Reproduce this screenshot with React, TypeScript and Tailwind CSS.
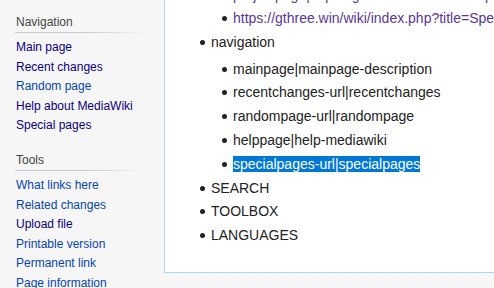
const navLinks = [
  { label: 'Main page', visited: true },
  { label: 'Recent changes', visited: true },
  { label: 'Random page', visited: false },
  { label: 'Help about MediaWiki', visited: true },
  { label: 'Special pages', visited: true },
];

const toolLinks = [
  { label: 'What links here', visited: false },
  { label: 'Related changes', visited: false },
  { label: 'Upload file', visited: true },
  { label: 'Printable version', visited: false },
  { label: 'Permanent link', visited: false },
  { label: 'Page information', visited: false },
];

type PortalProps = {
  title: string;
  links: { label: string; visited: boolean }[];
  className: string;
};

function Portal({ title, links, className }: PortalProps) {
  return (
    <div className={className}>
      <h3 className="text-[12px] leading-[16px] text-[#444] pb-[2px]">{title}</h3>
      <div className="h-px w-[132px] -ml-px bg-[linear-gradient(to_right,#c8ccd1_0%,#c8ccd1_55%,rgba(200,204,209,0)_100%)]" />
      <ul className="mt-[5px]">
        {links.map((link) => (
          <li key={link.label} className="text-[12px] leading-[19.6px]">
            <a className={link.visited ? 'text-[#0b0080]' : 'text-[#0645ad]'} href="#">
              {link.label}
            </a>
          </li>
        ))}
      </ul>
    </div>
  );
}

const bullet =
  "relative mb-[1.4px] whitespace-nowrap leading-[22.4px] before:absolute before:left-[-11px] before:top-[9px] before:h-[5px] before:w-[5px] before:rounded-full before:bg-[#222] before:content-['']";

const subItems = [
  'mainpage|mainpage-description',
  'recentchanges-url|recentchanges',
  'randompage-url|randompage',
  'helppage|help-mediawiki',
];

export default function App() {
  return (
    <div className="flex h-[288px] w-[494px] overflow-hidden bg-[#f6f6f6] font-['Liberation_Sans',Arial,sans-serif]">
      <aside className="w-[164px] shrink-0 pl-[16px]">
        <Portal title="Navigation" links={navLinks} className="pt-[14px]" />
        <Portal title="Tools" links={toolLinks} className="pt-[16px]" />
      </aside>

      <main className="h-[273px] flex-1 self-start overflow-hidden border-b border-l border-[#a7d7f9] bg-white text-[14px] text-[#222]">
        <ul className="-mt-[16.5px] ml-[46px]">
          <li className="leading-[22.4px]">
            <ul className="ml-[22px]">
              <li className={bullet}>
                <a className="text-[#5a3696]" href="#">
                  projectpage|https://gthree.win/wiki/index.php?title=Main_Page
                </a>
              </li>
              <li className={bullet}>
                <a className="text-[#5a3696]" href="#">
                  https://gthree.win/wiki/index.php?title=Special:Version
                </a>
              </li>
            </ul>
          </li>
          <li className={bullet}>
            navigation
            <ul className="ml-[22px] mt-[4.2px]">
              {subItems.map((item) => (
                <li key={item} className={bullet}>
                  {item}
                </li>
              ))}
              <li className={bullet}>
                <span className="bg-[#0078d7] text-white">specialpages-url|specialpages</span>
              </li>
            </ul>
          </li>
          <li className={bullet}>SEARCH</li>
          <li className={bullet}>TOOLBOX</li>
          <li className={bullet}>LANGUAGES</li>
        </ul>
      </main>
    </div>
  );
}
